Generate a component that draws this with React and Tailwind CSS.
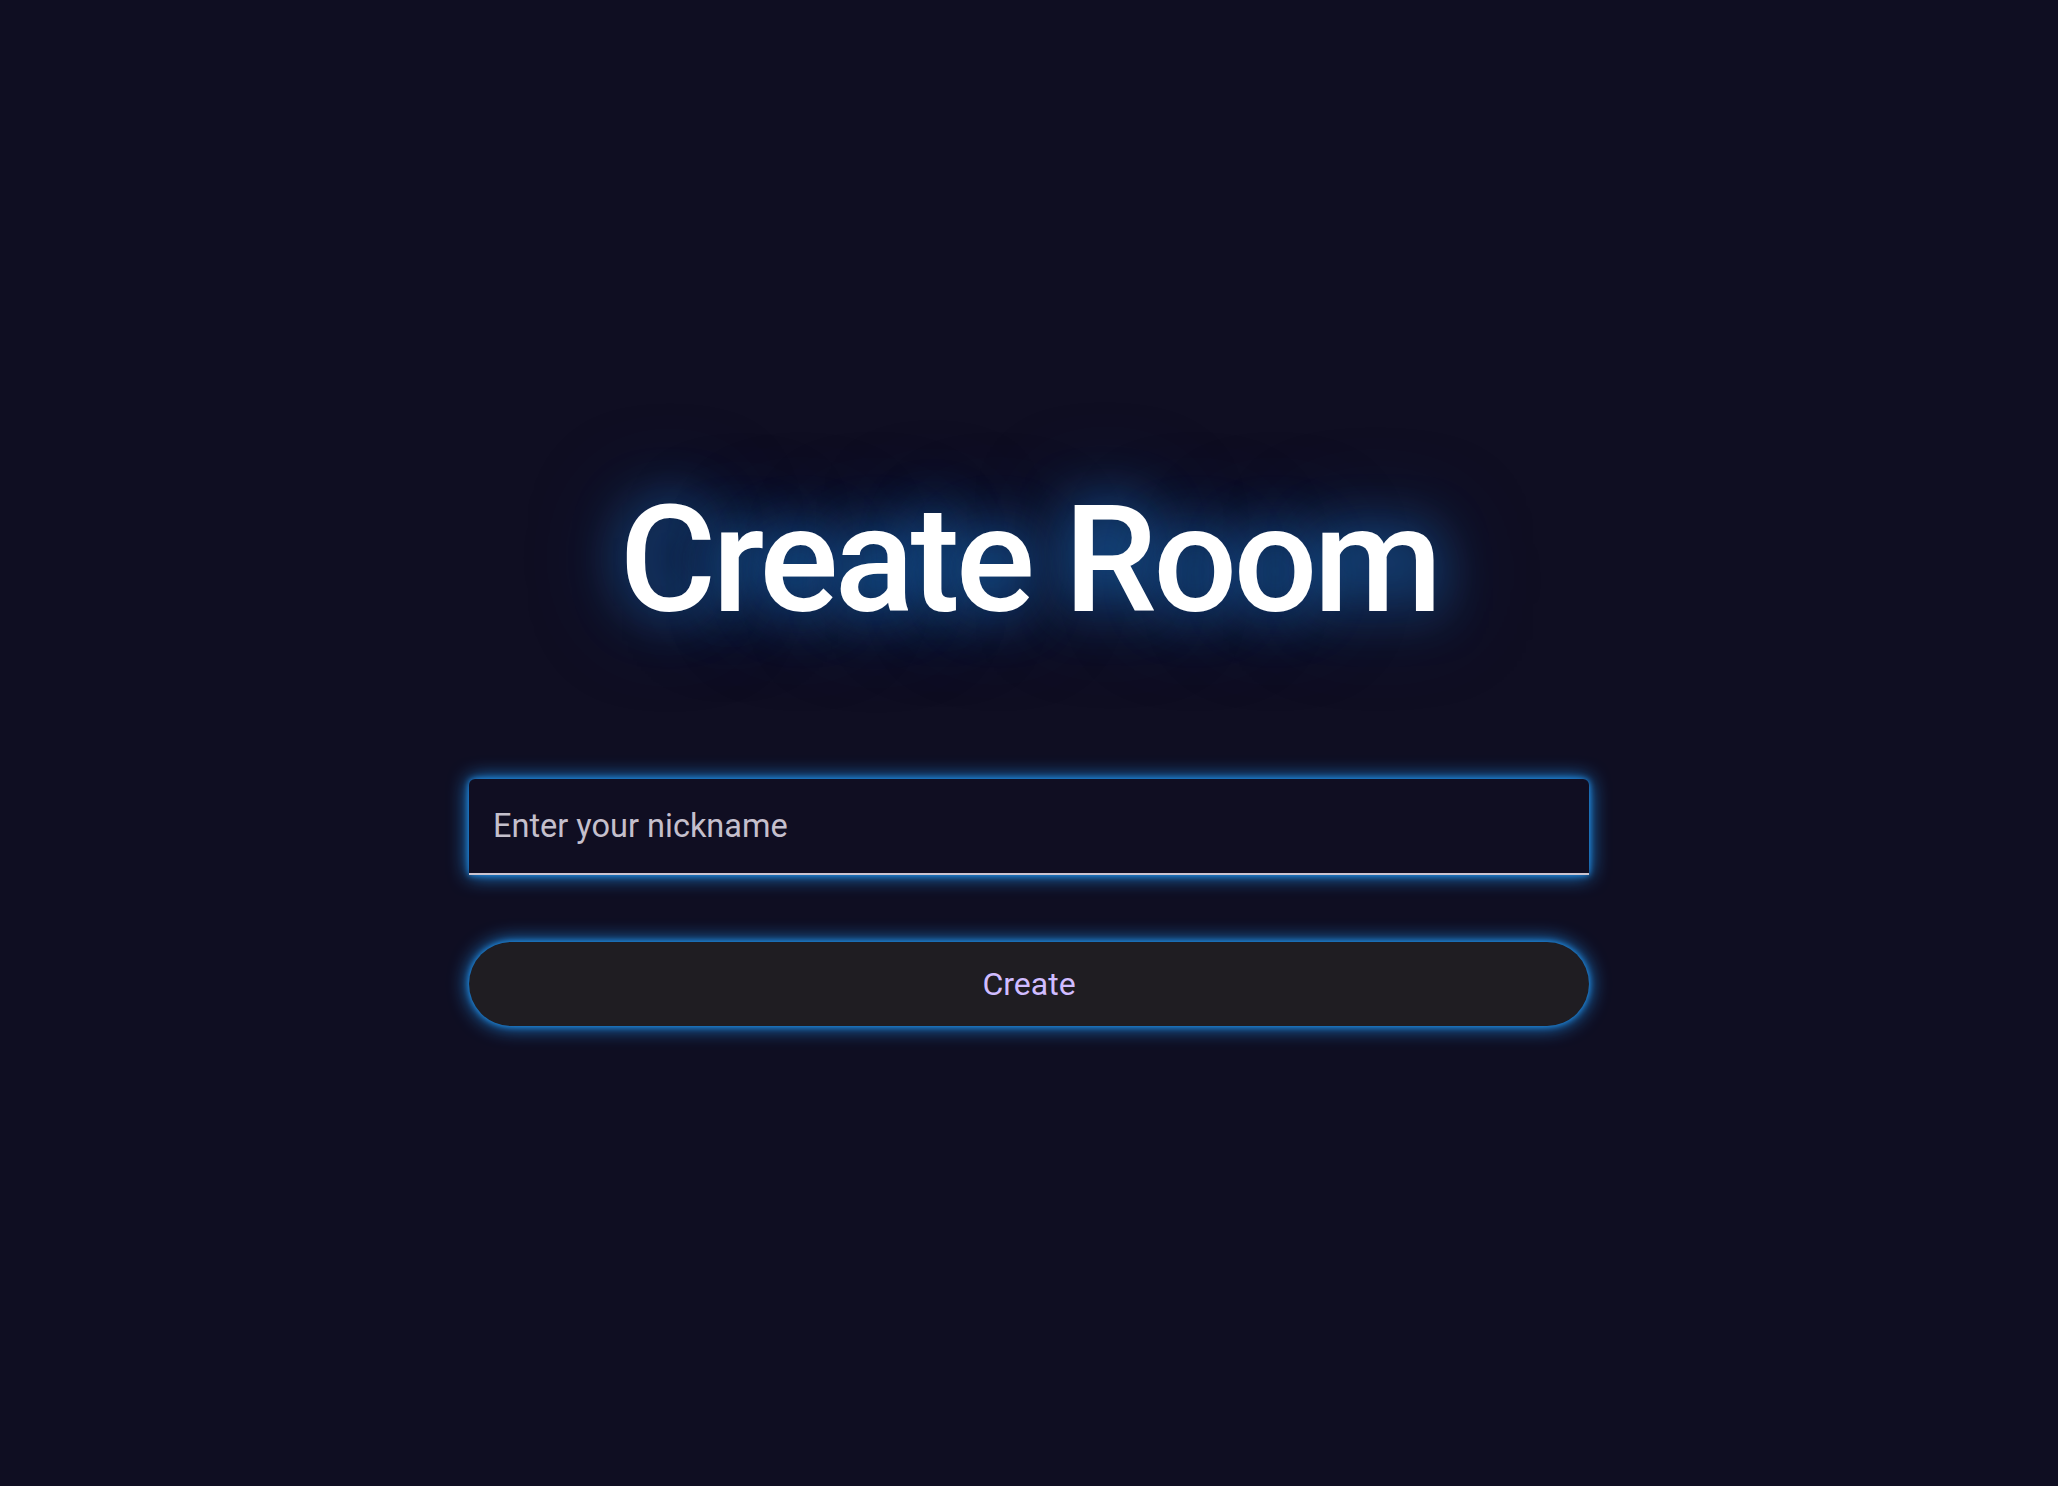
import { useState } from "react";

export default function App() {
  const [nickname, setNickname] = useState("");

  return (
    <div className="flex min-h-screen w-full flex-col items-center bg-[#0f0e22] font-['Roboto',sans-serif]">
      <h1 className="mt-[482px] text-[148px] font-medium leading-[158px] tracking-[-3.9px] text-white [text-shadow:0_0_50px_rgba(30,136,229,0.65),0_0_90px_rgba(21,101,192,0.55)]">
        Create Room
      </h1>

      <div className="mt-[139px] w-[1120px]">
        <input
          value={nickname}
          onChange={(event) => setNickname(event.target.value)}
          placeholder="Enter your nickname"
          className="h-[96px] w-full rounded-t-[6px] border-b-2 border-[#cac4d0] bg-[#100e22] px-[24px] text-[32.5px] text-[#e6e1e5] outline-none placeholder:text-[#c4bfcc] shadow-[0_0_20px_#2196f3,0_0_6px_#2196f3]"
        />
      </div>

      <button
        type="button"
        className="mt-[67px] h-[84px] w-[1120px] rounded-full bg-[#1f1d22] text-[32px] text-[#d0bcff] shadow-[0_0_20px_#2196f3,0_0_6px_#2196f3]"
      >
        Create
      </button>
    </div>
  );
}
